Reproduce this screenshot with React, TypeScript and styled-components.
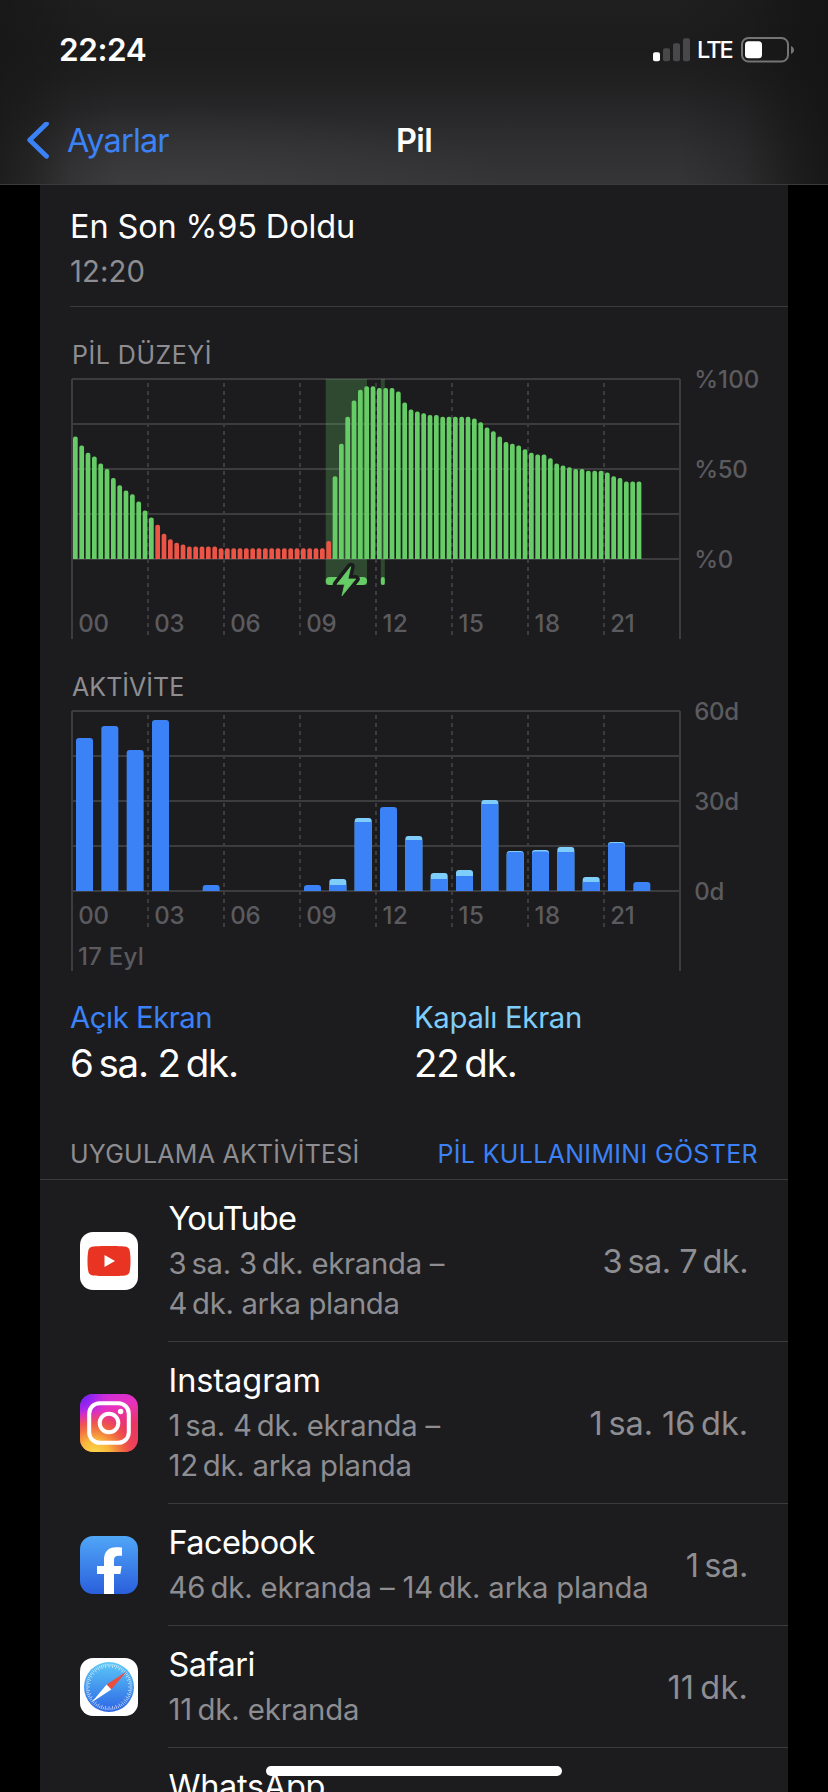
import React from "react";
import styled, { createGlobalStyle } from "styled-components";

const GlobalStyle = createGlobalStyle`
  * { box-sizing: border-box; }
  body { margin: 0; background: #000; font-family: Inter, "Noto Sans", sans-serif; font-kerning: normal; }
`;

const color = {
  panel: "#1c1c1e",
  line: "#3b3b3e",
  grid: "#3c3c3f",
  label: "#5b5b5f",
  muted: "#8d8d92",
  blue: "#3b82f6",
  sky: "#7fcdfb",
  green: "#66cc66",
  red: "#ec5545",
};

const Page = styled.div`
  position: relative;
  width: 828px;
  height: 1792px;
  overflow: hidden;
  background: #000;
  display: flex;
  flex-direction: column;
`;

const Header = styled.header`
  flex: none;
  height: 185px;
  border-bottom: 1px solid #3a3a3c;
  background:
    linear-gradient(90deg, rgba(23, 23, 23, 0.8) 0, rgba(23, 23, 23, 0.6) 30px, rgba(23, 23, 23, 0.2) 70px, rgba(23, 23, 23, 0) 115px),
    linear-gradient(270deg, rgba(20, 20, 20, 0.9) 0, rgba(20, 20, 20, 0.7) 35px, rgba(20, 20, 20, 0.25) 85px, rgba(20, 20, 20, 0) 150px),
    radial-gradient(ellipse 320px 85px at 190px 190px, rgba(72, 72, 74, 0.45), rgba(60, 60, 62, 0)),
    linear-gradient(180deg, #1f1f20 0, #1c1c1d 50px, #202021 80px, #28282a 115px, #303032 150px, #353537 184px);
  display: flex;
  flex-direction: column;
`;

const StatusBar = styled.div`
  height: 96px;
  padding: 4px 33px 0 59px;
  display: flex;
  align-items: center;
  justify-content: space-between;
`;

const Clock = styled.div`
  font-size: 31.5px;
  font-weight: 600;
  line-height: 40px;
  letter-spacing: -0.43px;
  color: #fff;
`;

const StatusIcons = styled.div`
  display: flex;
  align-items: center;
`;

const Network = styled.div`
  margin: 0 9px 0 6px;
  width: 35px;
  font-size: 23.5px;
  font-weight: 500;
  line-height: 30px;
  letter-spacing: -1.9px;
  color: #fff;
`;

const NavBar = styled.nav`
  height: 88px;
  padding-top: 2px;
  display: grid;
  grid-template-columns: 1fr auto 1fr;
  align-items: center;
`;

const BackLink = styled.a`
  display: flex;
  align-items: center;
  padding-left: 26px;
  gap: 17px;
  font-size: 32.5px;
  line-height: 40px;
  letter-spacing: -0.86px;
  color: ${color.blue};
`;

const NavTitle = styled.h1`
  margin: 0;
  font-size: 32.5px;
  font-weight: 600;
  line-height: 40px;
  letter-spacing: -0.7px;
  color: #fff;
`;

const Panel = styled.main`
  margin: 0 40px;
  height: 1607px;
  flex: none;
  overflow: hidden;
  background: ${color.panel};
`;

const LastCharge = styled.section`
  height: 122px;
  margin-left: 30px;
  padding-top: 22px;
  border-bottom: 1px solid ${color.line};
`;

const Title = styled.div<{ $track?: number }>`
  font-size: 32.5px;
  line-height: 40px;
  letter-spacing: ${(p) => p.$track ?? 0}px;
  color: #fff;
  white-space: nowrap;
`;

const Subtitle = styled.div<{ $track?: number }>`
  margin-top: 5px;
  font-size: 29.3px;
  line-height: 40px;
  letter-spacing: ${(p) => p.$track ?? 0}px;
  color: ${color.muted};
  white-space: nowrap;
`;

const SubtitleLine = styled.div<{ $track: number }>`
  letter-spacing: ${(p) => p.$track}px;
`;

const ChartSection = styled.section<{ $top: number }>`
  padding-top: ${(p) => p.$top}px;
`;

const ChartCanvas = styled.svg`
  display: block;
  overflow: visible;
`;

const Caption = styled.h2<{ $track: number; $accent?: boolean }>`
  margin: 0;
  font-size: 25px;
  font-weight: 400;
  line-height: 30px;
  letter-spacing: ${(p) => p.$track}px;
  color: ${(p) => (p.$accent ? color.blue : color.muted)};
  white-space: nowrap;
`;

const ChartCaption = styled(Caption)`
  padding-left: 32px;
`;

const Totals = styled.section`
  display: grid;
  grid-template-columns: 344px 1fr;
  padding: 18px 0 0 30px;
`;

const TotalLabel = styled.div<{ $tint: string; $track: number }>`
  font-size: 29.3px;
  line-height: 40px;
  letter-spacing: ${(p) => p.$track}px;
  color: ${(p) => p.$tint};
`;

const TotalValue = styled.div`
  margin-top: 1px;
  font-size: 38.5px;
  line-height: 48px;
  letter-spacing: -1.2px;
  color: #fff;
`;

const ListHeader = styled.div`
  margin-top: 52px;
  height: 41px;
  padding: 0 30px;
  display: flex;
  justify-content: space-between;
  border-bottom: 1px solid ${color.line};
`;

const AppRow = styled.div`
  display: flex;
  align-items: center;
  padding-left: 40px;
`;

const AppBody = styled.div`
  flex: 1;
  display: flex;
  align-items: center;
  justify-content: space-between;
  margin-left: 30px;
  padding: 19px 40px 17px 0.5px;
  border-bottom: 1px solid ${color.line};
`;

const Usage = styled.div<{ $track: number }>`
  font-size: 32.5px;
  line-height: 40px;
  letter-spacing: ${(p) => p.$track}px;
  color: ${color.muted};
  white-space: nowrap;
`;

const HomeIndicator = styled.div`
  position: absolute;
  left: 266px;
  bottom: 16px;
  width: 296px;
  height: 10px;
  border-radius: 5px;
  background: #fff;
`;

const HOURS = ["00", "03", "06", "09", "12", "15", "18", "21"];

const LEVELS = [
  68, 63, 59, 57, 53, 50, 45, 41, 38, 36, 32, 27, 23, 19, 14, 11, 9, 8, 7, 7, 7, 7, 7,
  6, 6, 6, 6, 6, 6, 6, 6, 6, 6, 6, 6, 6, 6, 6, 6, 6, 10, 46, 64, 79, 88, 94, 96, 96, 95, 95, 95,
  93, 87, 83, 82, 81, 80, 80, 79, 79, 79, 79, 79, 78, 76, 73, 71, 68, 65, 64, 63, 61, 59, 58, 58,
  56, 53, 52, 51, 50, 50, 49, 49, 49, 48, 46, 45, 43, 43, 43,
];

// [hour, total height, height with the screen on]
const ACTIVITY: [number, number, number][] = [
  [0, 153, 153], [1, 165, 165], [2, 141, 141], [3, 171, 171], [5, 6, 6], [9, 6, 6],
  [10, 12, 6], [11, 73, 69], [12, 84, 84], [13, 55, 51], [14, 18, 12], [15, 21, 15],
  [16, 91, 87], [17, 40, 39], [18, 41, 39.5], [19, 44, 39], [20, 14, 9], [21, 49, 48], [22, 9, 9],
];

const topRounded = (x: number, y: number, w: number, h: number, r: number) =>
  `M${x} ${y + h}V${y + r}Q${x} ${y} ${x + r} ${y}H${x + w - r}Q${x + w} ${y} ${x + w} ${y + r}V${y + h}Z`;

// The plot area is 608 x 180, its origin at (32, top) of the drawing.
function Grid({ top, dashEnd, axisEnd, labelY, scale }: {
  top: number; dashEnd: number; axisEnd: number; labelY: number; scale: string[];
}) {
  return (
    <g>
      {[0, 45, 90, 135, 180].map((y) => (
        <rect key={y} x={32} y={top + y - 1} width={608} height={2} fill={color.grid} />
      ))}
      {[32, 640].map((x) => (
        <rect key={x} x={x - 1} y={top} width={2} height={axisEnd - top} fill={color.grid} />
      ))}
      {HOURS.map((h, i) => (
        <g key={h}>
          {i > 0 && (
            <line x1={32 + i * 76} x2={32 + i * 76} y1={top} y2={dashEnd} stroke={color.grid} strokeWidth={2} strokeDasharray="4 4" strokeDashoffset={4} />
          )}
          <text x={38.3 + i * 76 + (h[0] === "1" ? 0.3 : 0)} y={labelY} fill={color.label} fontSize={24} fontWeight={500} letterSpacing={h[0] === "1" ? 0.5 : -0.3}>
            {h}
          </text>
        </g>
      ))}
      {scale.map((s, i) => (
        <text key={s} x={654.2} y={top + 9.3 + i * 90} fill={color.label} fontSize={24} fontWeight={500} letterSpacing={s === "%100" ? 0.1 : -0.3}>
          {s}
        </text>
      ))}
    </g>
  );
}

function BatteryChart() {
  const bolt = "M310.7 196.7L296.9 214.3H304.6L302 225.8L315.7 209H308Z";
  return (
    <ChartCanvas width={748} height={276} viewBox="0 0 748 276">
      <Grid top={9} dashEnd={265} axisEnd={269} labelY={262.2} scale={["%100", "%50", "%0"]} />
      <rect x={285.7} y={9} width={41.3} height={206} fill={color.green} opacity={0.25} />
      <rect x={340.8} y={9} width={4} height={206} fill={color.green} opacity={0.25} />
      {LEVELS.map((v, i) => (
        <path
          key={i}
          d={topRounded(33 + i * 6.3333, 189 - v * 1.8, 4.7, v * 1.8, 2)}
          fill={v < 20 ? color.red : color.green}
        />
      ))}
      <rect x={285.7} y={207} width={41.3} height={8} rx={4} fill={color.green} />
      <rect x={340.8} y={207} width={4} height={8} rx={2} fill={color.green} />
      <path d={bolt} stroke={color.panel} strokeWidth={8} strokeLinejoin="round" fill={color.panel} />
      <path d={bolt} fill={color.green} stroke={color.green} strokeWidth={0.8} strokeLinejoin="round" />
    </ChartCanvas>
  );
}

function ActivityChart() {
  return (
    <ChartCanvas width={748} height={278} viewBox="0 0 748 278">
      <Grid top={9} dashEnd={225} axisEnd={269} labelY={222.2} scale={["60d", "30d", "0d"]} />
      <text x={38} y={263} fill={color.label} fontSize={24} fontWeight={500} letterSpacing={0.25}>17 Eyl</text>
      {ACTIVITY.map(([hour, total, on]) => {
        const x = 36 + hour * 25.3333;
        return (
          <g key={hour}>
            {total > on && <path d={topRounded(x, 189 - total, 17, total, 3)} fill={color.sky} />}
            {total - on > 1.5 ? (
              <rect x={x} y={189 - on} width={17} height={on} fill={color.blue} />
            ) : (
              <path d={topRounded(x, 189 - on, 17, on, 3)} fill={color.blue} />
            )}
          </g>
        );
      })}
    </ChartCanvas>
  );
}

const YouTubeIcon = () => (
  <svg width={58} height={58} viewBox="0 0 58 58">
    <rect width={58} height={58} rx={13} fill="#fff" />
    <path d="M29 14c8 0 13 .2 16 .6 3 .4 4.400 1.800 4.800 4.700.6 4 .7 6 .7 9.700s-.1 5.700-.7 9.700c-.4 2.900-1.800 4.300-4.800 4.700-3 .4-8 .6-16 .6s-13-.2-16-.6c-3-.4-4.400-1.800-4.800-4.700-.6-4-.7-6-.7-9.700s.1-5.700.7-9.700c.4-2.900 1.800-4.300 4.800-4.700 3-.4 8-.6 16-.6z" fill="#e93323" />
    <path d="M24.500 22.900v12.200L35 29z" fill="#fff" />
  </svg>
);

const InstagramIcon = () => (
  <svg width={58} height={58} viewBox="0 0 58 58">
    <defs>
      <linearGradient id="igBase" x1="0.3" y1="0" x2="0.6" y2="1">
        <stop offset="0" stopColor="#cc2ddd" />
        <stop offset="0.3" stopColor="#e832bc" />
        <stop offset="0.65" stopColor="#ea3562" />
        <stop offset="1" stopColor="#ec3f58" />
      </linearGradient>
      <radialGradient id="igPurple" cx="0" cy="0" r="0.55">
        <stop offset="0" stopColor="#5a1cff" />
        <stop offset="0.4" stopColor="#8a22f5" stopOpacity="0.8" />
        <stop offset="1" stopColor="#d02ee0" stopOpacity="0" />
      </radialGradient>
      <radialGradient id="igYellow" cx="0.25" cy="1.05" r="0.78">
        <stop offset="0" stopColor="#fbdc4a" />
        <stop offset="0.35" stopColor="#f8b43c" />
        <stop offset="0.7" stopColor="#f0603c" stopOpacity="0.8" />
        <stop offset="1" stopColor="#ec3a68" stopOpacity="0" />
      </radialGradient>
    </defs>
    <rect width={58} height={58} rx={13} fill="url(#igBase)" />
    <rect width={58} height={58} rx={13} fill="url(#igPurple)" />
    <rect width={58} height={58} rx={13} fill="url(#igYellow)" />
    <rect x={9.2} y={9.2} width={39.6} height={39.6} rx={10.5} fill="none" stroke="#fff" strokeWidth={4} />
    <circle cx={29} cy={29} r={9.3} fill="none" stroke="#fff" strokeWidth={4} />
    <circle cx={40.6} cy={17.5} r={2.7} fill="#fff" />
  </svg>
);

const FacebookIcon = () => (
  <svg width={58} height={58} viewBox="0 0 58 58">
    <defs>
      <linearGradient id="fbBase" x1="0" y1="0" x2="0" y2="1">
        <stop offset="0" stopColor="#50a6f7" />
        <stop offset="1" stopColor="#2a5fdc" />
      </linearGradient>
    </defs>
    <rect width={58} height={58} rx={13} fill="url(#fbBase)" />
    <path d="M24 58V38H17V30H24V23.500C24 15.500 28.500 11.200 36 11.200C38.400 11.200 40.500 11.300 42 11.600V19.700H38.500C35.200 19.700 34 21.300 34 24V30H41.600L40.400 38H34V58Z" fill="#fff" />
  </svg>
);

const SafariIcon = () => (
  <svg width={58} height={58} viewBox="0 0 58 58">
    <defs>
      <linearGradient id="sfBase" x1="0" y1="0" x2="0" y2="1">
        <stop offset="0" stopColor="#5cc8f8" />
        <stop offset="1" stopColor="#2c64e4" />
      </linearGradient>
    </defs>
    <rect width={58} height={58} rx={13} fill="#fff" />
    <circle cx={29} cy={29} r={25} fill="url(#sfBase)" />
    {Array.from({ length: 72 }, (_, i) => (
      <line
        key={i}
        x1={29}
        x2={29}
        y1={5.7}
        y2={i % 2 ? 8.2 : 9.8}
        stroke="#fff"
        strokeWidth={0.7}
        opacity={0.8}
        transform={`rotate(${i * 5} 29 29)`}
      />
    ))}
    <path d="M46.600 13.600L31.300 31.500L26.600 26.600Z" fill="#ec4d3d" />
    <path d="M11.800 44.300L26.600 26.600L31.300 31.500Z" fill="#fff" />
  </svg>
);

const WhatsAppIcon = () => (
  <svg width={58} height={58} viewBox="0 0 58 58">
    <rect width={58} height={58} rx={13} fill="#4cd964" />
  </svg>
);

type Entry = {
  name: string; track: number; lines: [string, number][]; usage: string; usageTrack: number; icon: React.ReactNode;
};

// Numbers and their units are joined by a thin space (U+2009).
const APPS: Entry[] = [
  { name: "YouTube", track: -0.82, lines: [["3\u2009sa. 3\u2009dk. ekranda –", -0.27], ["4\u2009dk. arka planda", -0.34]], usage: "3\u2009sa. 7\u2009dk.", usageTrack: -0.52, icon: <YouTubeIcon /> },
  { name: "Instagram", track: -0.07, lines: [["1\u2009sa. 4\u2009dk. ekranda –", -0.22], ["12\u2009dk. arka planda", -0.25]], usage: "1\u2009sa. 16\u2009dk.", usageTrack: -0.07, icon: <InstagramIcon /> },
  { name: "Facebook", track: -0.58, lines: [["46\u2009dk. ekranda – 14\u2009dk. arka planda", -0.15]], usage: "1\u2009sa.", usageTrack: -0.31, icon: <FacebookIcon /> },
  { name: "Safari", track: -0.52, lines: [["11\u2009dk. ekranda", -0.09]], usage: "11\u2009dk.", usageTrack: 0.18, icon: <SafariIcon /> },
];

// The last row is cut by the bottom of the screen just below its name.
const CutRow = styled(AppRow)`
  height: 162px;
`;

const CutBody = styled(AppBody)`
  align-self: flex-start;
`;

export default function App() {
  return (
    <Page>
      <GlobalStyle />
      <Header>
        <StatusBar>
          <Clock>22:24</Clock>
          <StatusIcons>
            <svg width={38} height={24} viewBox="0 0 38 24">
              <rect x={0} y={14.3} width={7} height={9} rx={2} fill="#fff" />
              <rect x={10} y={10.3} width={7} height={13} rx={2} fill="#48484a" />
              <rect x={20} y={5.2} width={7} height={18} rx={2} fill="#48484a" />
              <rect x={30} y={0.2} width={7} height={23} rx={2} fill="#48484a" />
            </svg>
            <Network>LTE</Network>
            <svg width={54} height={26} viewBox="0 0 54 26">
              <rect x={1} y={1} width={46} height={23.5} rx={6.5} fill="none" stroke="#747476" strokeWidth={2} />
              <rect x={4} y={4.300} width={17} height={17} rx={3.5} fill="#fff" />
              <path d="M50 9c4 1.500 4 6.500 0 8z" fill="#747476" />
            </svg>
          </StatusIcons>
        </StatusBar>
        <NavBar>
          <BackLink>
            <svg width={24} height={38} viewBox="0 1 24 38">
              <path d="M20.500 2.700L3.700 19L20.500 35.300" fill="none" stroke={color.blue} strokeWidth={4.8} strokeLinecap="round" strokeLinejoin="round" />
            </svg>
            Ayarlar
          </BackLink>
          <NavTitle>Pil</NavTitle>
        </NavBar>
      </Header>
      <Panel>
        <LastCharge>
          <Title $track={-0.15}>En Son %95 Doldu</Title>
          <Subtitle $track={0.13}>12:20</Subtitle>
        </LastCharge>
        <ChartSection $top={33}>
          <ChartCaption $track={0.5}>PİL DÜZEYİ</ChartCaption>
          <BatteryChart />
        </ChartSection>
        <ChartSection $top={26}>
          <ChartCaption $track={0.04}>AKTİVİTE</ChartCaption>
          <ActivityChart />
        </ChartSection>
        <Totals>
          <div>
            <TotalLabel $tint={color.blue} $track={-0.47}>Açık Ekran</TotalLabel>
            <TotalValue>6{"\u2009"}sa. 2{"\u2009"}dk.</TotalValue>
          </div>
          <div>
            <TotalLabel $tint={color.sky} $track={-0.31}>Kapalı Ekran</TotalLabel>
            <TotalValue>22{"\u2009"}dk.</TotalValue>
          </div>
        </Totals>
        <ListHeader>
          <Caption $track={0.24}>UYGULAMA AKTİVİTESİ</Caption>
          <Caption $track={0.33} $accent>PİL KULLANIMINI GÖSTER</Caption>
        </ListHeader>
        {APPS.map((a) => (
          <AppRow key={a.name}>
            {a.icon}
            <AppBody>
              <div>
                <Title $track={a.track}>{a.name}</Title>
                <Subtitle>
                  {a.lines.map(([text, track]) => (
                    <SubtitleLine key={text} $track={track}>{text}</SubtitleLine>
                  ))}
                </Subtitle>
              </div>
              <Usage $track={a.usageTrack}>{a.usage}</Usage>
            </AppBody>
          </AppRow>
        ))}
        <CutRow>
          <WhatsAppIcon />
          <CutBody>
            <Title $track={-0.33}>WhatsApp</Title>
          </CutBody>
        </CutRow>
      </Panel>
      <HomeIndicator />
    </Page>
  );
}
